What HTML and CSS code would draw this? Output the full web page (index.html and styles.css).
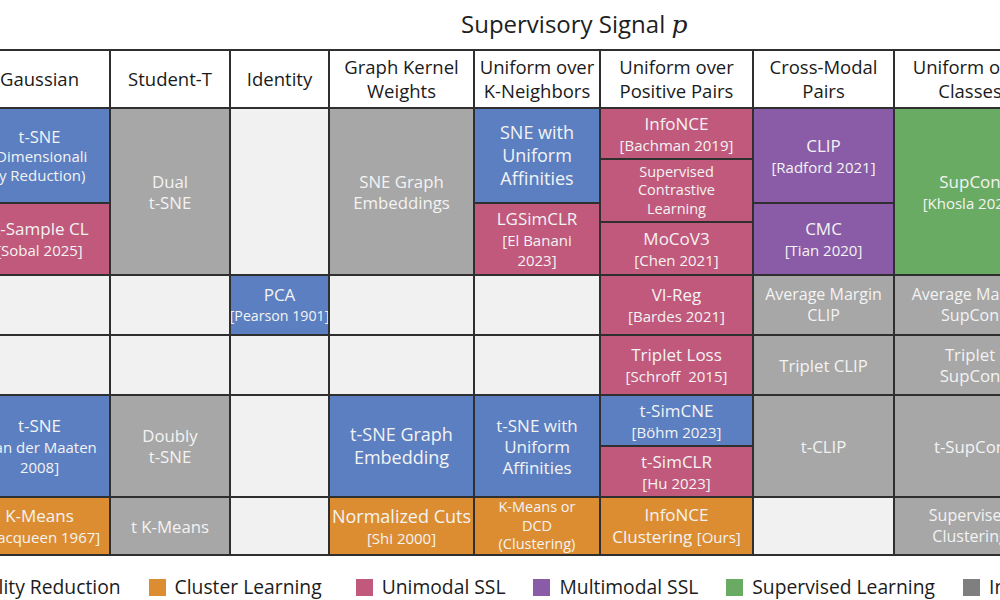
FILE: index.html
```html
<!DOCTYPE html>
<html lang="en">
<head>
<meta charset="utf-8">
<title>Supervisory Signal p</title>
<link rel="stylesheet" href="styles.css">
</head>
<body>
<div class="page">
  <h1 class="title">Supervisory Signal <span class="var">p</span></h1>

  <div class="grid">
    <!-- header -->
    <div class="hd">Gaussian</div>
    <div class="hd">Student-T</div>
    <div class="hd">Identity</div>
    <div class="hd">Graph Kernel<br>Weights</div>
    <div class="hd">Uniform over<br>K-Neighbors</div>
    <div class="hd">Uniform over<br>Positive Pairs</div>
    <div class="hd">Cross-Modal<br>Pairs</div>
    <div class="hd">Uniform over<br>Classes</div>

    <!-- row 1 -->
    <div class="stack">
      <div class="cell blue h93"><span class="sm16">t-SNE</span><span class="sm15">(Dimensionali<br>ty Reduction)</span></div>
      <div class="cell pink grow"><span class="n">X-Sample CL</span><span class="ct">[Sobal 2025]</span></div>
    </div>
    <div class="cell gray"><span class="g17">Dual<br>t-SNE</span></div>
    <div class="cell empty"></div>
    <div class="cell gray"><span class="g17">SNE Graph<br>Embeddings</span></div>
    <div class="stack">
      <div class="cell blue h93"><span class="n18">SNE with<br>Uniform<br>Affinities</span></div>
      <div class="cell pink grow"><span class="n">LGSimCLR</span><span class="ct lh">[El Banani<br>2023]</span></div>
    </div>
    <div class="stack">
      <div class="cell pink h49"><span class="n">InfoNCE</span><span class="ct">[Bachman 2019]</span></div>
      <div class="cell pink h61"><span class="sm14">Supervised<br>Contrastive<br>Learning</span></div>
      <div class="cell pink grow"><span class="n">MoCoV3</span><span class="ct">[Chen 2021]</span></div>
    </div>
    <div class="stack">
      <div class="cell purple h93"><span class="n">CLIP</span><span class="ct">[Radford 2021]</span></div>
      <div class="cell purple grow"><span class="n">CMC</span><span class="ct">[Tian 2020]</span></div>
    </div>
    <div class="cell green"><span class="n">SupCon</span><span class="ct">[Khosla 2020]</span></div>

    <!-- row 2 -->
    <div class="cell empty"></div>
    <div class="cell empty"></div>
    <div class="cell blue"><span class="n">PCA</span><span class="ct narrow">[Pearson 1901]</span></div>
    <div class="cell empty"></div>
    <div class="cell empty"></div>
    <div class="cell pink"><span class="n">VI-Reg</span><span class="ct">[Bardes 2021]</span></div>
    <div class="cell gray"><span class="g16">Average Margin<br>CLIP</span></div>
    <div class="cell gray"><span class="g16">Average Margin<br>SupCon</span></div>

    <!-- row 3 -->
    <div class="cell empty"></div>
    <div class="cell empty"></div>
    <div class="cell empty"></div>
    <div class="cell empty"></div>
    <div class="cell empty"></div>
    <div class="cell pink"><span class="n">Triplet Loss</span><span class="ct">[Schroff&nbsp; 2015]</span></div>
    <div class="cell gray"><span class="g17">Triplet CLIP</span></div>
    <div class="cell gray"><span class="g17">Triplet<br>SupCon</span></div>

    <!-- row 4 -->
    <div class="cell blue"><span class="n">t-SNE</span><span class="ct lh">[van der Maaten<br>2008]</span></div>
    <div class="cell gray"><span class="g17">Doubly<br>t-SNE</span></div>
    <div class="cell empty"></div>
    <div class="cell blue"><span class="n18">t-SNE Graph<br>Embedding</span></div>
    <div class="cell blue"><span class="n17">t-SNE with<br>Uniform<br>Affinities</span></div>
    <div class="stack">
      <div class="cell blue h49"><span class="n">t-SimCNE</span><span class="ct">[Böhm 2023]</span></div>
      <div class="cell pink grow"><span class="n">t-SimCLR</span><span class="ct">[Hu 2023]</span></div>
    </div>
    <div class="cell gray"><span class="g17">t-CLIP</span></div>
    <div class="cell gray"><span class="g17">t-SupCon</span></div>

    <!-- row 5 -->
    <div class="cell orange"><span class="n">K-Means</span><span class="ct">[Macqueen 1967]</span></div>
    <div class="cell gray"><span class="g17">t K-Means</span></div>
    <div class="cell empty"></div>
    <div class="cell orange"><span class="n18">Normalized Cuts</span><span class="ct">[Shi 2000]</span></div>
    <div class="cell orange"><span class="sm14">K-Means or<br>DCD<br>(Clustering)</span></div>
    <div class="cell orange"><span class="n">InfoNCE</span><span class="n">Clustering <span class="ct">[Ours]</span></span></div>
    <div class="cell empty"></div>
    <div class="cell gray"><span class="g16">Supervised<br>Clustering</span></div>
  </div>

  <div class="legend">
    <div class="item"><span class="sw sw-blue"></span>Dimensionality Reduction</div>
    <div class="item wide"><span class="sw sw-orange"></span>Cluster Learning</div>
    <div class="item"><span class="sw sw-pink"></span>Unimodal SSL</div>
    <div class="item"><span class="sw sw-purple"></span>Multimodal SSL</div>
    <div class="item"><span class="sw sw-green"></span>Supervised Learning</div>
    <div class="item"><span class="sw sw-gray"></span>Inferred Methods</div>
  </div>
</div>
</body>
</html>
```
FILE: styles.css
```css
html, body {
  margin: 0;
  padding: 0;
  background: #ffffff;
}
body {
  width: 1000px;
  height: 600px;
  overflow: hidden;
  font-family: "Open Sans", "Noto Sans", sans-serif;
  color: #1c1c1c;
}
.page {
  width: 1000px;
  overflow: hidden;
}
.title {
  margin: 0;
  height: 49px;
  box-sizing: border-box;
  padding: 8px 0 0 461px;
  font-size: 24px;
  font-weight: 400;
  line-height: 32px;
  color: #1e1e1e;
  white-space: nowrap;
}
.title .var {
  font-family: "DejaVu Serif", "Liberation Serif", serif;
  font-style: italic;
  font-size: 25px;
}
.grid {
  display: grid;
  grid-template-columns: 139px 118px 97px 143px 124px 151px 139px 150px;
  grid-template-rows: 56px 165px 58px 58px 100px 56px;
  gap: 2px;
  padding: 2px;
  background: #2f2f2f;
  margin-left: -32px;
  width: max-content;
}
.hd {
  background: #ffffff;
  display: flex;
  align-items: center;
  justify-content: center;
  text-align: center;
  font-size: 18.5px;
  line-height: 24px;
  color: #1a1a1a;
  white-space: nowrap;
}
.stack {
  display: flex;
  flex-direction: column;
  gap: 2px;
  background: #2f2f2f;
}
.cell {
  display: flex;
  flex-direction: column;
  align-items: center;
  justify-content: center;
  text-align: center;
  color: #f3f3f3;
  white-space: nowrap;
  overflow: hidden;
}
.h93 { height: 93px; flex: none; }
.h49 { height: 49px; flex: none; }
.h61 { height: 61px; flex: none; }
.grow { flex: 1; }

.blue { background: #5b7fc1; }
.pink { background: #c1597c; }
.purple { background: #8a5ca7; }
.green { background: #6aab64; }
.orange { background: #dd8d31; }
.gray { background: #a7a7a7; }
.empty { background: #f1f1f1; }

.n { font-size: 17px; line-height: 22px; }
.g16 { font-size: 16px; line-height: 21px; }
.g17 { font-size: 16.8px; line-height: 21px; }
.n17 { font-size: 17px; line-height: 21px; }
.n18 { font-size: 18px; line-height: 23px; }
.sm16 { font-size: 16.5px; line-height: 21px; }
.sm15 { font-size: 15px; line-height: 19.5px; }
.sm14 { font-size: 14.5px; line-height: 18.5px; }
.ct { font-size: 15px; line-height: 20px; }
.ct.lh { line-height: 20px; }
.ct.narrow { font-size: 14.2px; }
.n .ct { font-size: 15px; }

.legend {
  display: flex;
  align-items: center;
  margin: 19px 0 0 -135px;
  font-size: 19.3px;
  line-height: 24px;
  color: #1c1c1c;
  white-space: nowrap;
}
.item {
  display: flex;
  align-items: center;
  margin-right: 28px;
}
.item.wide {
  margin-right: 34px;
}
.sw {
  width: 17px;
  height: 17px;
  margin-right: 9px;
  flex: none;
}
.sw-blue { background: #5b7fc1; }
.sw-orange { background: #dd8d31; }
.sw-pink { background: #c1597c; }
.sw-purple { background: #8a5ca7; }
.sw-green { background: #6aab64; }
.sw-gray { background: #7f7f7f; }
```
